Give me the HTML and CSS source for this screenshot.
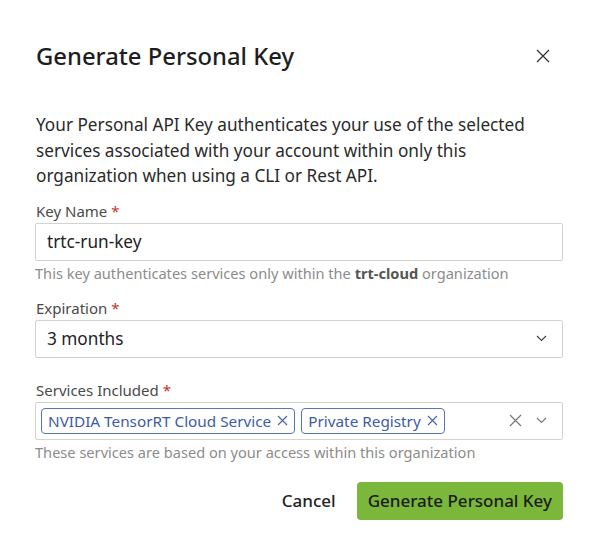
FILE: index.html
```html
<!DOCTYPE html>
<html lang="en">
<head>
	<meta charset="UTF-8">
	<title>Generate Personal Key</title>
	<link rel="stylesheet" href="styles.css">
</head>
<body>
	<div class="dialog">
		<div class="dialogHeader">
			<h1>Generate Personal Key</h1>
			<button class="closeBtn" aria-label="Close">
				<svg width="14" height="14" viewBox="0 0 14 14"><path d="M1 1L13 13M13 1L1 13" stroke="#333" stroke-width="1.3" fill="none"/></svg>
			</button>
		</div>

		<p class="intro">Your Personal API Key authenticates your use of the selected services associated with your account within only this organization when using a CLI or Rest API.</p>

		<div class="field first">
			<label>Key Name <span class="req">*</span></label>
			<div class="control">trtc-run-key</div>
			<div class="help">This key authenticates services only within the <b>trt-cloud</b> organization</div>
		</div>

		<div class="field">
			<label>Expiration <span class="req">*</span></label>
			<div class="control">
				<span class="grow">3 months</span>
				<svg class="chev" width="11" height="7" viewBox="0 0 11 7"><path d="M1 1L5.5 5.5L10 1" stroke="#444" stroke-width="1.2" fill="none"/></svg>
			</div>
		</div>

		<div class="field services">
			<label>Services Included <span class="req">*</span></label>
			<div class="control multi">
				<span class="chip">NVIDIA TensorRT Cloud Service
					<svg width="11" height="11" viewBox="0 0 11 11"><path d="M1 1L10 10M10 1L1 10" stroke="#4a68ad" stroke-width="1.2" fill="none"/></svg>
				</span>
				<span class="chip">Private Registry
					<svg width="11" height="11" viewBox="0 0 11 11"><path d="M1 1L10 10M10 1L1 10" stroke="#4a68ad" stroke-width="1.2" fill="none"/></svg>
				</span>
				<span class="grow"></span>
				<svg class="clear" width="13" height="13" viewBox="0 0 13 13"><path d="M1 1L12 12M12 1L1 12" stroke="#777" stroke-width="1.2" fill="none"/></svg>
				<svg class="chev" width="11" height="7" viewBox="0 0 11 7"><path d="M1 1L5.5 5.5L10 1" stroke="#777" stroke-width="1.2" fill="none"/></svg>
			</div>
			<div class="help">These services are based on your access within this organization</div>
		</div>

		<div class="actions">
			<button class="cancel">Cancel</button>
			<button class="primary">Generate Personal Key</button>
		</div>
	</div>
</body>
</html>
```

FILE: styles.css
```css
* {
	box-sizing: border-box;
}

body {
	margin: 0;
	background: #fff;
	font-family: "Noto Sans", "Open Sans", sans-serif;
	color: #222;
}

.dialog {
	display: flex;
	flex-direction: column;
	padding: 40px 33px 0 35px;
}

/********** header **********/
.dialogHeader {
	display: flex;
	align-items: center;
	justify-content: space-between;
	height: 32px;
}
.dialogHeader h1 {
	margin: 0 0 0 1px;
	font-size: 23.8px;
	font-weight: 500;
	color: #1e1e1e;
}
.closeBtn {
	border: 0;
	background: none;
	padding: 0;
	margin-right: 13px;
	display: flex;
}

.intro {
	margin: 40px 0 0 1px;
	font-size: 17.2px;
	line-height: 25.5px;
	color: #2a2a2a;
}

/********** fields **********/
.field {
	display: flex;
	flex-direction: column;
	margin-top: 15px;
}
.field.first {
	margin-top: 12px;
}
.field.services {
	margin-top: 22px;
}
.field label {
	font-size: 15px;
	line-height: 20px;
	color: #4a4a4a;
	margin: 0 0 2px 1px;
}
.req {
	color: #c4342c;
}
.control {
	display: flex;
	align-items: center;
	height: 38px;
	border: 1px solid #d3d3d3;
	border-radius: 2px;
	padding: 0 15px 0 11px;
	font-size: 17.2px;
	color: #222;
}
.grow {
	flex: 1;
}
.help {
	font-size: 14.6px;
	line-height: 20px;
	color: #8c8c8c;
	margin: 2px 0 0 0;
}
.help b {
	color: #555;
}

.multi {
	padding-left: 5px;
	gap: 6px;
}
.chip {
	display: flex;
	align-items: center;
	gap: 6px;
	height: 26px;
	padding: 0 6px 0 6px;
	border: 1.5px solid #5875b8;
	border-radius: 4px;
	color: #3d5ca3;
	font-size: 15.3px;
}
.multi .clear {
	margin-right: 8px;
}

/********** buttons **********/
.actions {
	display: flex;
	justify-content: flex-end;
	align-items: center;
	gap: 21px;
	margin-top: 20px;
}
.actions button {
	font-family: inherit;
	font-size: 17px;
	font-weight: 500;
	border: 0;
	cursor: pointer;
}
.cancel {
	background: none;
	color: #222;
	padding: 0;
}
.primary {
	background: #7ab73a;
	color: #1b1b1b;
	height: 38px;
	padding: 0 11px;
	border-radius: 4px;
}
```
